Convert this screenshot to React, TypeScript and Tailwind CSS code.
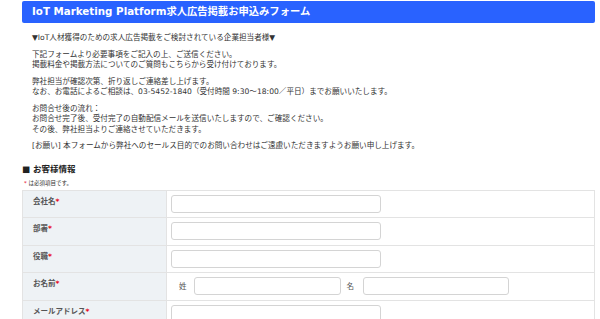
const font = { fontFamily: '"DejaVu Sans", "Noto Sans CJK JP", sans-serif' };

const Req = () => <span className="text-[#e60012]">*</span>;

const Input = ({ className = 'w-[210px]' }: { className?: string }) => (
  <input type="text" className={`h-[18px] rounded-[3px] border border-[#d4d4d4] bg-white ${className}`} />
);

const Row = ({ label, children }: { label: string; children: React.ReactNode }) => (
  <div className="grid h-[27.5px] grid-cols-[144px_1fr] border-b border-[#e3e3e3]">
    <div className="border-r border-[#e3e3e3] bg-[#eef2f5] pl-[10px] pt-[6px] text-[7.5px] leading-[10px] font-bold text-[#555]">
      {label}
      <Req />
    </div>
    <div className="flex items-center pl-[4px]">{children}</div>
  </div>
);

const Para = ({ lines }: { lines: string[] }) => (
  <div>
    {lines.map((l) => (
      <div key={l} className="h-[10.5px] whitespace-nowrap leading-[10.5px]">
        {l}
      </div>
    ))}
  </div>
);

export default function App() {
  return (
    <div className="h-[319px] w-[600px] overflow-hidden bg-white" style={font}>
      <div className="ml-[22px] w-[573px] pt-px">
        <h1 className="flex h-[22px] items-center rounded-[2px] bg-[#2962ff] pl-[10px] text-[10.3px] font-bold text-white">
          IoT Marketing Platform求人広告掲載お申込みフォーム
        </h1>

        <div className="flex flex-col gap-[6px] pl-[10px] pt-[10px] text-[7.6px] text-[#333]">
          <Para lines={['▼IoT人材獲得のための求人広告掲載をご検討されている企業担当者様▼']} />
          <Para
            lines={[
              '下記フォームより必要事項をご記入の上、ご送信ください。',
              '掲載料金や掲載方法についてのご質問もこちらから受け付けております。',
            ]}
          />
          <Para
            lines={[
              '弊社担当が確認次第、折り返しご連絡差し上げます。',
              'なお、お電話によるご相談は、03-5452-1840（受付時間 9:30～18:00／平日）までお願いいたします。',
            ]}
          />
          <Para
            lines={[
              'お問合せ後の流れ：',
              'お問合せ完了後、受付完了の自動配信メールを送信いたしますので、ご確認ください。',
              'その後、弊社担当よりご連絡させていただきます。',
            ]}
          />
          <Para lines={['[お願い] 本フォームから弊社へのセールス目的でのお問い合わせはご遠慮いただきますようお願い申し上げます。']} />
        </div>

        <h2 className="mt-[11px] h-[12px] text-[8.5px] leading-[12px] font-bold text-[#222]">■ お客様情報</h2>
        <p className="mt-[4px] h-[8px] pl-[2px] text-[5.5px] leading-[8px] text-[#333]">
          <Req /> は必須項目です。
        </p>

        <div className="mt-[3px] border-t border-r border-l border-[#e3e3e3]">
          <Row label="会社名">
            <Input />
          </Row>
          <Row label="部署">
            <Input />
          </Row>
          <Row label="役職">
            <Input />
          </Row>
          <Row label="お名前">
            <span className="ml-[8px] mr-[7px] text-[7.5px] text-[#555]">姓</span>
            <Input className="w-[147px]" />
            <span className="ml-[6px] mr-[9px] text-[7.5px] text-[#555]">名</span>
            <Input className="w-[146px]" />
          </Row>
          <Row label="メールアドレス">
            <Input />
          </Row>
        </div>
      </div>
    </div>
  );
}
